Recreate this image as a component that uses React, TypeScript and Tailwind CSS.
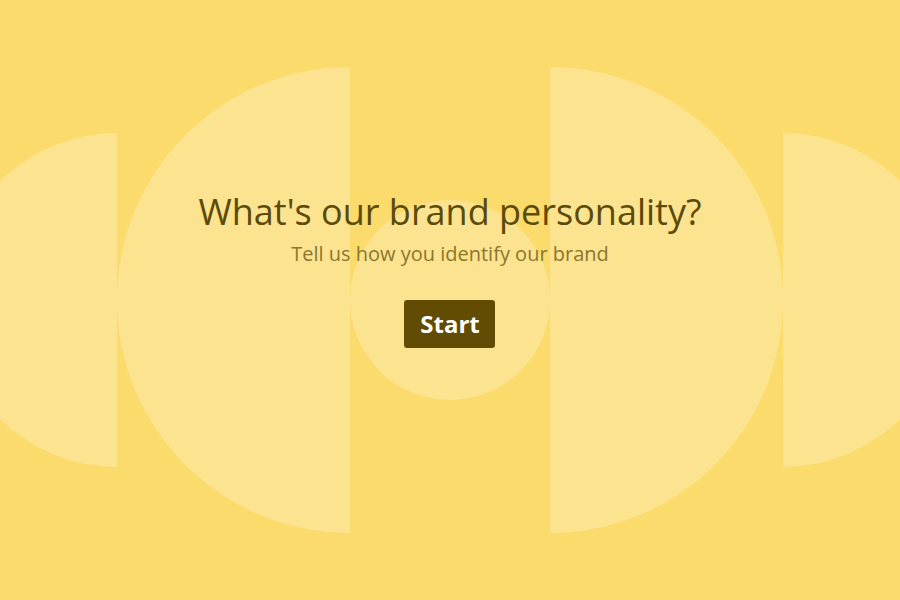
// Brand personality quiz — intro screen

export default function App() {
  return (
    <div
      className="relative flex h-[600px] w-full items-center justify-center overflow-hidden bg-[#fbdb6c] pb-[64px]"
      style={{ fontFamily: '"Open Sans", "Noto Sans", sans-serif' }}
    >
      {/* Decorative background shapes */}
      <div aria-hidden className="pointer-events-none absolute inset-0 flex items-center justify-center">
        <div className="h-[334px] w-[167px] shrink-0 rounded-l-full bg-[#fce38f]" />
        <div className="h-[466px] w-[233px] shrink-0 rounded-l-full bg-[#fce38f]" />
        <div className="h-[200px] w-[200px] shrink-0 rounded-full bg-[#fce38f]" />
        <div className="h-[466px] w-[233px] shrink-0 rounded-r-full bg-[#fce38f]" />
        <div className="h-[334px] w-[167px] shrink-0 rounded-r-full bg-[#fce38f]" />
      </div>

      {/* Content */}
      <div className="relative flex flex-col items-center">
        <h1 className="text-[36px] leading-[48px] text-[#5b4a08]">
          What's our brand personality?
        </h1>
        <p className="mt-[4px] text-[20px] leading-[28px] text-[#8b762c]">
          Tell us how you identify our brand
        </p>
        <button className="mt-[32px] h-[48px] w-[91px] rounded-[3px] bg-[#624c03] text-[24px] font-bold text-white">
          Start
        </button>
      </div>
    </div>
  );
}
